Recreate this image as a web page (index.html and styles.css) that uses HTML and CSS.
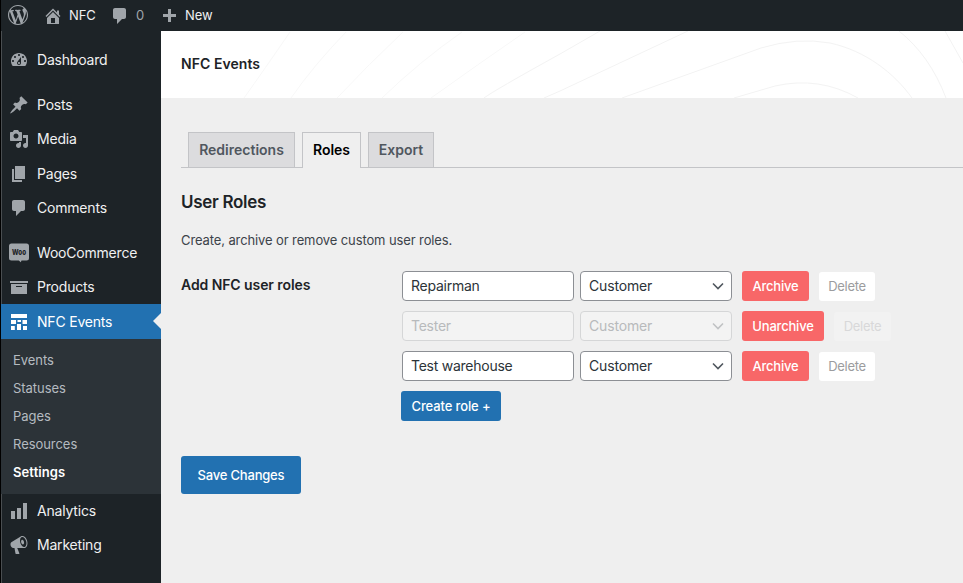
FILE: index.html
```html
<!DOCTYPE html>
<html lang="en">
<head>
<meta charset="utf-8">
<title>NFC Events</title>
<link rel="stylesheet" href="styles.css">
</head>
<body>
<div class="app">
  <header class="adminbar">
    <svg class="icon wp" viewBox="0 0 20 20"><path d="M20 10c0-5.51-4.49-10-10-10C4.48 0 0 4.49 0 10c0 5.52 4.48 10 10 10 5.51 0 10-4.48 10-10zM7.78 15.37L4.37 6.22c.55-.02 1.17-.08 1.17-.08.5-.06.44-1.13-.06-1.11 0 0-1.45.11-2.37.11-.18 0-.37 0-.58-.01C4.12 2.69 6.87 1.11 10 1.11c2.33 0 4.45.87 6.05 2.34-.68-.11-1.65.39-1.65 1.58 0 .74.45 1.36.9 2.1.35.61.55 1.36.55 2.46 0 1.49-1.4 5-1.4 5l-3.03-8.37c.54-.02.82-.17.82-.17.5-.05.44-1.25-.06-1.22 0 0-1.44.12-2.38.12-.87 0-2.33-.12-2.33-.12-.5-.03-.56 1.2-.06 1.22l.92.08 1.26 3.41zM17.41 10c.24-.64.74-1.87.43-4.25.7 1.29 1.05 2.71 1.05 4.25 0 3.29-1.73 6.24-4.4 7.78.97-2.59 1.94-5.2 2.92-7.78zM6.1 18.09C3.12 16.65 1.11 13.53 1.11 10c0-1.3.23-2.48.72-3.59C3.25 10.3 4.67 14.2 6.1 18.09zm4.03-6.63l2.58 6.98c-.86.29-1.76.45-2.71.45-.79 0-1.57-.11-2.29-.33.81-2.38 1.62-4.74 2.42-7.1z"/></svg>
    <a class="bar-item site"><svg class="icon" viewBox="0 0 20 20"><path d="M16 8.5l1.53 1.53-1.06 1.06L10 4.6l-6.47 6.5-1.06-1.07L10 2.5l4 4v-2h2v4zm-6-2.46l6 5.99V18H4v-5.97zM12 17v-5H8v5h4z"/></svg><span>NFC</span></a>
    <a class="bar-item count"><svg class="icon" viewBox="0 0 20 20"><path d="M5 2h9c1.1 0 2 .9 2 2v7c0 1.1-.9 2-2 2h-2l-5 5v-5H5c-1.1 0-2-.9-2-2V4c0-1.1.9-2 2-2z"/></svg><span>0</span></a>
    <a class="bar-item new"><svg class="icon" viewBox="0 0 20 20"><path d="M17 7v3h-5v5H9v-5H4V7h5V2h3v5h5z"/></svg><span>New</span></a>
  </header>
  <div class="body">
    <nav class="menu">
      <a class="item"><svg class="icon" viewBox="0 0 20 20"><path d="M3.76 16h12.48c1.1-1.37 1.76-3.11 1.76-5 0-4.42-3.58-8-8-8s-8 3.58-8 8c0 1.89.66 3.63 1.76 5zM10 4c.55 0 1 .45 1 1s-.45 1-1 1-1-.45-1-1 .45-1 1-1zM6 6c.55 0 1 .45 1 1s-.45 1-1 1-1-.45-1-1 .45-1 1-1zm8 0c.55 0 1 .45 1 1s-.45 1-1 1-1-.45-1-1 .45-1 1-1zm-5.37 5.55L12 7v6c0 1.1-.9 2-2 2s-2-.9-2-2c0-.57.24-1.08.63-1.45zM4 10c.55 0 1 .45 1 1s-.45 1-1 1-1-.45-1-1 .45-1 1-1zm12 0c.55 0 1 .45 1 1s-.45 1-1 1-1-.45-1-1 .45-1 1-1zm-5 3c0-.55-.45-1-1-1s-1 .45-1 1 .45 1 1 1 1-.45 1-1z"/></svg><span>Dashboard</span></a>
      <a class="item gap"><svg class="icon" viewBox="0 0 20 20"><path d="M10.44 3.02l1.82-1.82 6.36 6.35-1.83 1.82c-1.05-.68-2.48-.57-3.41.36l-.75.75c-.92.93-1.04 2.35-.35 3.41l-1.83 1.82-2.41-2.41-2.8 2.79c-.42.42-3.38 2.71-3.8 2.29s1.86-3.39 2.28-3.81l2.79-2.79L4.1 9.36l1.83-1.82c1.05.69 2.48.57 3.4-.36l.75-.75c.93-.92 1.05-2.35.36-3.41z"/></svg><span>Posts</span></a>
      <a class="item"><svg class="icon" viewBox="0 0 20 20"><path d="M13 11V4c0-.55-.45-1-1-1h-1.67L9 1H5L3.67 3H2c-.55 0-1 .45-1 1v7c0 .55.45 1 1 1h10c.55 0 1-.45 1-1zM7 4.5c1.38 0 2.5 1.12 2.5 2.5S8.38 9.5 7 9.5 4.5 8.38 4.5 7 5.62 4.5 7 4.5zM14 6h5v10.5c0 1.38-1.12 2.5-2.5 2.5S14 17.88 14 16.5s1.12-2.5 2.5-2.5c.17 0 .34.02.5.05V9h-3V6zm-4 8.05V13h2v3.5c0 1.38-1.12 2.5-2.5 2.5S7 17.88 7 16.5 8.12 14 9.5 14c.17 0 .34.02.5.05z"/></svg><span>Media</span></a>
      <a class="item"><svg class="icon" viewBox="0 0 20 20"><path d="M6 15V2h10v13H6zm-1 1h8v2H3V5h2v11z"/></svg><span>Pages</span></a>
      <a class="item"><svg class="icon" viewBox="0 0 20 20"><path d="M5 2h9c1.1 0 2 .9 2 2v7c0 1.1-.9 2-2 2h-2l-5 5v-5H5c-1.1 0-2-.9-2-2V4c0-1.1.9-2 2-2z"/></svg><span>Comments</span></a>
      <a class="item gap"><svg class="icon" viewBox="0 0 20 20"><path d="M2.500 0.500h15a2.500 2.500 0 0 1 2.500 2.500v12a2.500 2.500 0 0 1-2.500 2.500h-5l-.7 1.700-2-1.700H2.500A2.500 2.500 0 0 1 0 15v-12A2.500 2.500 0 0 1 2.500 .5z"/><text class="woo" x="3" y="11.500" textLength="14" lengthAdjust="spacingAndGlyphs">Woo</text></svg><span>WooCommerce</span></a>
      <a class="item"><svg class="icon" viewBox="0 0 20 20"><path d="M19 4v2H1V4h18zM2 7h16v10H2V7zm11 3V9H7v1h6z"/></svg><span>Products</span></a>
      <a class="item current"><svg class="icon" viewBox="0 0 20 20"><path d="M2 2h16v4H2zM2 8h5v4H2zM8.500 8H12v2H8.500zM13.500 8H18v4h-4.500zM2 14h3.800v4H2zM8 12h4v6H8zM14 14h4v4h-4z"/></svg><span>NFC Events</span></a>
      <div class="submenu">
        <a>Events</a><a>Statuses</a><a>Pages</a><a>Resources</a><a class="active">Settings</a>
      </div>
      <a class="item"><svg class="icon" viewBox="0 0 20 20"><path d="M18 18V2h-4v16h4zm-6 0V7H8v11h4zm-6 0v-8H2v8h4z"/></svg><span>Analytics</span></a>
      <a class="item"><svg class="icon" viewBox="0 0 20 20"><path d="M18.150 5.940c.46 1.620.38 3.220-.02 4.480-.42 1.280-1.260 2.180-2.300 2.480-.16.060-.26.060-.4.060-.06.020-.12.020-.18.020-.06.020-.14.020-.22.020h-6.800l2.220 5.500c.02.140-.06.260-.14.340-.08.100-.24.160-.34.160H6.950c-.1 0-.26-.06-.34-.16-.08-.08-.16-.2-.14-.34l-1-5.500H4.250l-.02-.02c-.5.060-1.080-.18-1.540-.62s-.88-1.080-1.060-1.880c-.24-.8-.2-1.560-.02-2.200.18-.62.58-1.080 1.060-1.300l.02-.02 9-5.400c.1-.06.18-.1.24-.16.06-.04.14-.08.24-.12.16-.08.28-.12.5-.18 1.040-.3 2.240.1 3.220.98s1.840 2.240 2.260 3.860zm-2.580 5.980h-.02c.4-.1.74-.34 1.040-.7.58-.7.86-1.760.86-3.040 0-.64-.1-1.300-.28-1.980-.34-1.360-1.020-2.500-1.780-3.240s-1.680-1.100-2.460-.88c-.82.220-1.400.96-1.700 2-.32 1.040-.28 2.360.06 3.720.38 1.360 1 2.500 1.800 3.240.78.740 1.620 1.100 2.480.88zm-2.540-7.080c.22-.04.42-.02.62.04.38.16.76.48 1.020 1s.42 1.200.42 1.780c0 .3-.04.56-.12.8-.18.48-.44.84-.86.94-.34.100-.8-.06-1.140-.4s-.64-.86-.78-1.500c-.18-.62-.12-1.240.02-1.720s.48-.84.82-.94z"/></svg><span>Marketing</span></a>
    </nav>
    <div class="content">
      <div class="banner">
        <svg class="contours" viewBox="0 0 802 67">
          <g class="faint"><path d="M83 67Q103 39 129 1"/><path d="M130 67Q153 34 185 1"/><path d="M176 67Q208 33 242 1"/><path d="M221 67Q258 31 301 1"/><path d="M270 67Q316 34 364 1"/></g>
          <path d="M323 67Q332 60 399 23L439 0"/>
          <path d="M383 67L399 60L527 0"/>
          <path d="M461 67L600 17Q636 6 669 12C705 20 733 42 751 67"/>
          <path d="M573 67L614 55Q658 45 697 67"/>
          <path d="M738 0C758 16 774 38 785 67"/>
          <path d="M784 0L802 32"/>
        </svg>
        <h1>NFC Events</h1>
      </div>
      <div class="tabs"><a class="tab t1">Redirections</a><a class="tab t2 selected">Roles</a><a class="tab t3">Export</a></div>
      <main class="panel">
        <h2>User Roles</h2>
        <p>Create, archive or remove custom user roles.</p>
        <div class="form">
          <div class="label">Add NFC user roles</div>
          <div class="roles">
            <div class="role"><div class="field name">Repairman</div><div class="field select"><span>Customer</span><svg viewBox="0 0 12 8"><path d="M1 1.500l5 5 5-5"/></svg></div><a class="btn danger">Archive</a><a class="btn ghost">Delete</a></div>
            <div class="role off"><div class="field name">Tester</div><div class="field select"><span>Customer</span><svg viewBox="0 0 12 8"><path d="M1 1.500l5 5 5-5"/></svg></div><a class="btn danger wide">Unarchive</a><a class="btn ghost">Delete</a></div>
            <div class="role"><div class="field name">Test warehouse</div><div class="field select"><span>Customer</span><svg viewBox="0 0 12 8"><path d="M1 1.500l5 5 5-5"/></svg></div><a class="btn danger">Archive</a><a class="btn ghost">Delete</a></div>
            <a class="btn create">Create role +</a>
          </div>
        </div>
        <a class="btn save">Save Changes</a>
      </main>
    </div>
  </div>
</div>
</body>
</html>
```
FILE: styles.css
```css
* { box-sizing: border-box; }
body { margin: 0; font-family: Inter, "Liberation Sans", sans-serif; font-size: 14px; color: #1d2327; background: #efefef; }
h1, h2, p { margin: 0; }
.app { width: 963px; height: 583px; overflow: hidden; display: flex; flex-direction: column; }
.adminbar { height: 31px; background: #1d2327; display: flex; align-items: center; padding: 0 0 1px 7px; color: #f0f0f1; font-size: 13px; letter-spacing: -.1px; border-left: 1px solid #000; flex: none; }
.icon { width: 20px; height: 20px; fill: #a0a5aa; flex: none; display: block; overflow: visible; }
.bar-item { display: flex; align-items: center; }
.site { margin-left: 15px; gap: 6px; width: 67px; }
.count { gap: 6px; color: #a0a5aa; width: 49px; }
.new { gap: 6px; }
.site .icon, .count .icon { margin-top: 1px; }
.new .icon { margin-top: 3px; }
.body { display: flex; flex: 1; min-height: 0; }
.menu { width: 161px; flex: none; background: #1d2327; color: #f0f0f1; padding-top: 12px; border-left: 1px solid #000; box-shadow: inset 1px 0 #4a4e51; }
.item { height: 34.35px; display: flex; align-items: center; gap: 8px; padding-left: 8px; }
.item span { letter-spacing: -.2px; padding-bottom: 1px; }
.gap { margin-top: 10.5px; }
.woo { font-size: 8px; font-weight: 800; fill: #1d2327; }
.current { position: relative; background: #2271b1; color: #fff; }
.current .icon { fill: #fff; }
.current::after { content: ""; position: absolute; right: 0; top: 9px; border: 8px solid transparent; border-left: 0; border-right-color: #efefef; }
.submenu { height: 155px; background: #2c3338; padding: 7.5px 0 0 12px; font-size: 13px; letter-spacing: -.05px; color: #b5bbc0; }
.submenu a { display: block; height: 28px; line-height: 28px; }
.submenu .active { color: #fff; font-weight: 600; letter-spacing: .1px; }
.content { flex: 1; min-width: 0; }
.banner { height: 67px; background: #fff; display: flex; align-items: center; padding: 0 0 2px 20px; position: relative; }
.banner h1 { font-size: 14px; font-weight: 600; position: relative; letter-spacing: .05px; }
.contours { position: absolute; inset: 0; width: 802px; height: 67px; fill: none; stroke: #f3f3f3; stroke-width: 1; }
.faint { stroke: #f8f8f8; }
.tabs { margin: 34px 0 0 20px; height: 36px; border-bottom: 1px solid #c3c4c7; padding-left: 7px; display: flex; gap: 7px; }
.tab { height: 35px; border: 1px solid #c3c4c7; border-bottom: 0; padding-bottom: 1px; background: #dcdcde; color: #50575e; font-weight: 600; font-size: 14px; display: flex; align-items: center; justify-content: center; }
.t1 { width: 107px; }
.t2 { width: 59px; }
.t3 { width: 66px; }
.selected { height: 36px; padding-bottom: 2px; background: #efefef; color: #000; }
.panel { padding: 24px 0 0 20px; }
h2 { font-size: 17px; line-height: 20px; font-weight: 600; letter-spacing: -.3px; }
p { font-size: 13px; line-height: 20px; margin-top: 18px; color: #3c434a; letter-spacing: -.11px; }
.form { display: flex; margin-top: 21px; }
.label { width: 221px; font-weight: 600; line-height: 28px; letter-spacing: -.08px; }
.roles { display: flex; flex-direction: column; gap: 10px; align-items: flex-start; }
.role { display: flex; align-items: center; }
.field { width: 172px; height: 30px; border: 1px solid #8c8f94; border-radius: 4px; background: #fff; color: #2c3338; line-height: 28px; padding-left: 8px; }
.name { letter-spacing: -.25px; }
.select { width: 152px; margin: 0 10px 0 6px; display: flex; align-items: center; justify-content: space-between; padding-right: 7px; letter-spacing: -.15px; }
.select svg { width: 12px; height: 8px; fill: none; stroke: #50575e; stroke-width: 1.6; }
.off .field { background: #f3f3f3; border-color: #d5d6d7; color: #b8babc; }
.off svg { stroke: #c0c2c4; }
.btn { display: flex; align-items: center; justify-content: center; height: 30px; border-radius: 3px; font-size: 13px; color: #fff; letter-spacing: -.2px; }
.danger { width: 67px; background: #f86768; font-weight: 500; }
.wide { width: 82px; }
.ghost { width: 56px; height: 29px; margin: 1px 0 0 10px; padding-bottom: 1px; background: #fff; color: #9b9c9e; letter-spacing: -.3px; }
.off .ghost { width: 57px; background: #f2f2f2; color: #d8d8d9; }
.create { width: 100px; background: #2271b1; margin-left: -1px; font-weight: 500; letter-spacing: -.12px; }
.save { width: 120px; height: 38px; margin-top: 35px; background: #2271b1; font-weight: 500; }
```
